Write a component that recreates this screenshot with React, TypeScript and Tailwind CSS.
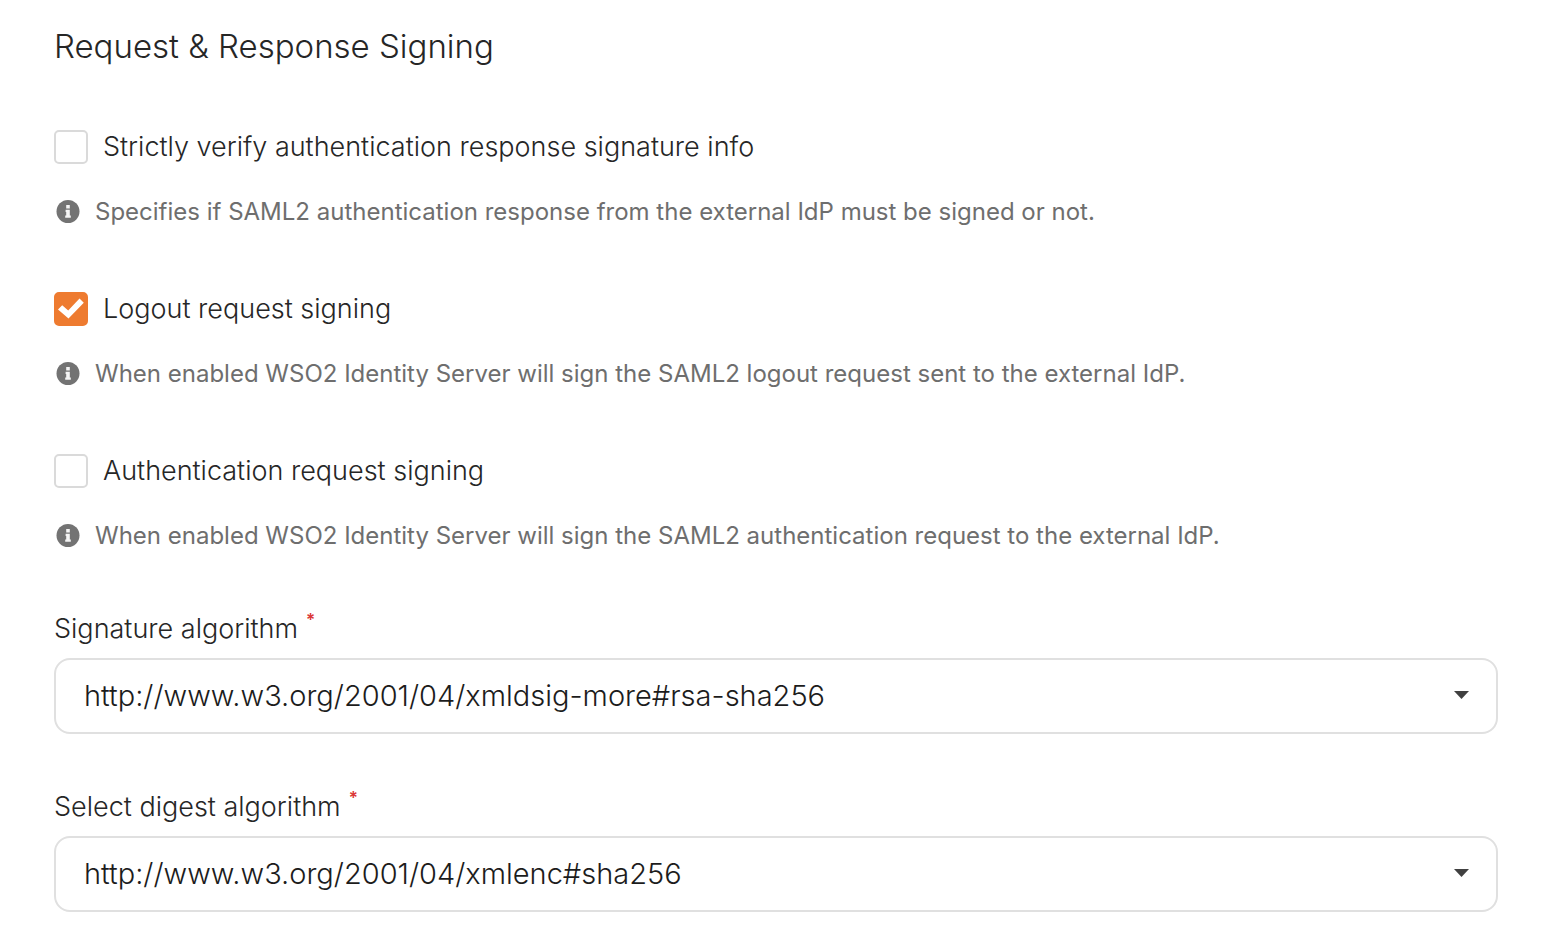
import { useState } from 'react';

type Signing = { id: string; label: string; hint: string; checked: boolean };

const signingOptions: Signing[] = [
  {
    id: 'verify',
    label: 'Strictly verify authentication response signature info',
    hint: 'Specifies if SAML2 authentication response from the external IdP must be signed or not.',
    checked: false,
  },
  {
    id: 'logout',
    label: 'Logout request signing',
    hint: 'When enabled WSO2 Identity Server will sign the SAML2 logout request sent to the external IdP.',
    checked: true,
  },
  {
    id: 'authn',
    label: 'Authentication request signing',
    hint: 'When enabled WSO2 Identity Server will sign the SAML2 authentication request to the external IdP.',
    checked: false,
  },
];

function InfoIcon() {
  return (
    <svg viewBox="0 0 24 24" className="size-6 shrink-0" aria-hidden="true">
      <circle cx="12" cy="11.5" r="11.5" fill="#737373" />
      <path d="M10.200 5h3.600v3.400h-3.600zM9.600 9.800h4.200v5.700h1v2.300h-5.600v-2.300h1v-3.400h-.6z" fill="#f4f4f4" />
    </svg>
  );
}

function CheckField({ option }: { option: Signing }) {
  const [checked, setChecked] = useState(option.checked);
  return (
    <div className="flex flex-col gap-8">
      <div className="flex items-center gap-[15px]">
        <span className="grid size-[34px] shrink-0">
          <input
            id={option.id}
            type="checkbox"
            checked={checked}
            onChange={(e) => setChecked(e.target.checked)}
            aria-describedby={`${option.id}-hint`}
            className="peer col-start-1 row-start-1 size-[34px] appearance-none rounded-[5px] border-2 border-[#dadada] bg-white checked:border-[#ee7b30] checked:bg-[#ee7b30]"
          />
          <svg
            viewBox="0 0 34 34"
            className="pointer-events-none invisible col-start-1 row-start-1 size-[34px] peer-checked:visible"
            aria-hidden="true"
          >
            <path d="M4 17.500l4.200-4.200 6 5.200L25.500 6.500l4.300 4.300L14.500 26.500z" fill="#fff" />
          </svg>
        </span>
        <label htmlFor={option.id} className="text-[27px] leading-[34px] text-[#262626]">
          {option.label}
        </label>
      </div>
      <p id={`${option.id}-hint`} className="flex items-center gap-[15px] pl-[2px] text-[24px] leading-8 font-normal text-[#6e6e6e]">
        <InfoIcon />
        {option.hint}
      </p>
    </div>
  );
}

function SelectField({ id, label, value }: { id: string; label: string; value: string }) {
  return (
    <div className="flex flex-col gap-3">
      <label htmlFor={id} className="flex gap-2 text-[27px] leading-[34px] text-[#262626]">
        {label}
        <span className="text-[17px] leading-4 font-semibold text-[#db3838]">*</span>
      </label>
      <div className="grid items-center">
        <select
          id={id}
          required
          defaultValue={value}
          className="col-start-1 row-start-1 h-[76px] w-full appearance-none rounded-2xl border-2 border-[#e0e0e0] bg-white px-7 text-[29px] font-light text-[#1c1c1c]"
        >
          <option>{value}</option>
        </select>
        <svg
          viewBox="0 0 16 10"
          className="pointer-events-none col-start-1 row-start-1 mr-7 h-[10px] w-4 justify-self-end"
          aria-hidden="true"
        >
          <path d="M0 0h15L7.500 8z" fill="#404040" />
        </svg>
      </div>
    </div>
  );
}

export default function App() {
  return (
    <main className="min-h-screen bg-white pt-6 pr-[46px] pb-9 pl-[54px] font-['Inter',sans-serif] font-light">
      <form>
        <h1 className="text-[33px] leading-[44px] text-[#262626]">Request &amp; Response Signing</h1>
        <div className="mt-[62px] flex flex-col gap-16">
          {signingOptions.map((option) => (
            <CheckField key={option.id} option={option} />
          ))}
        </div>
        <div className="mt-[60px] flex flex-col gap-14">
          <SelectField id="signature" label="Signature algorithm" value="http://www.w3.org/2001/04/xmldsig-more#rsa-sha256" />
          <SelectField id="digest" label="Select digest algorithm" value="http://www.w3.org/2001/04/xmlenc#sha256" />
        </div>
      </form>
    </main>
  );
}
